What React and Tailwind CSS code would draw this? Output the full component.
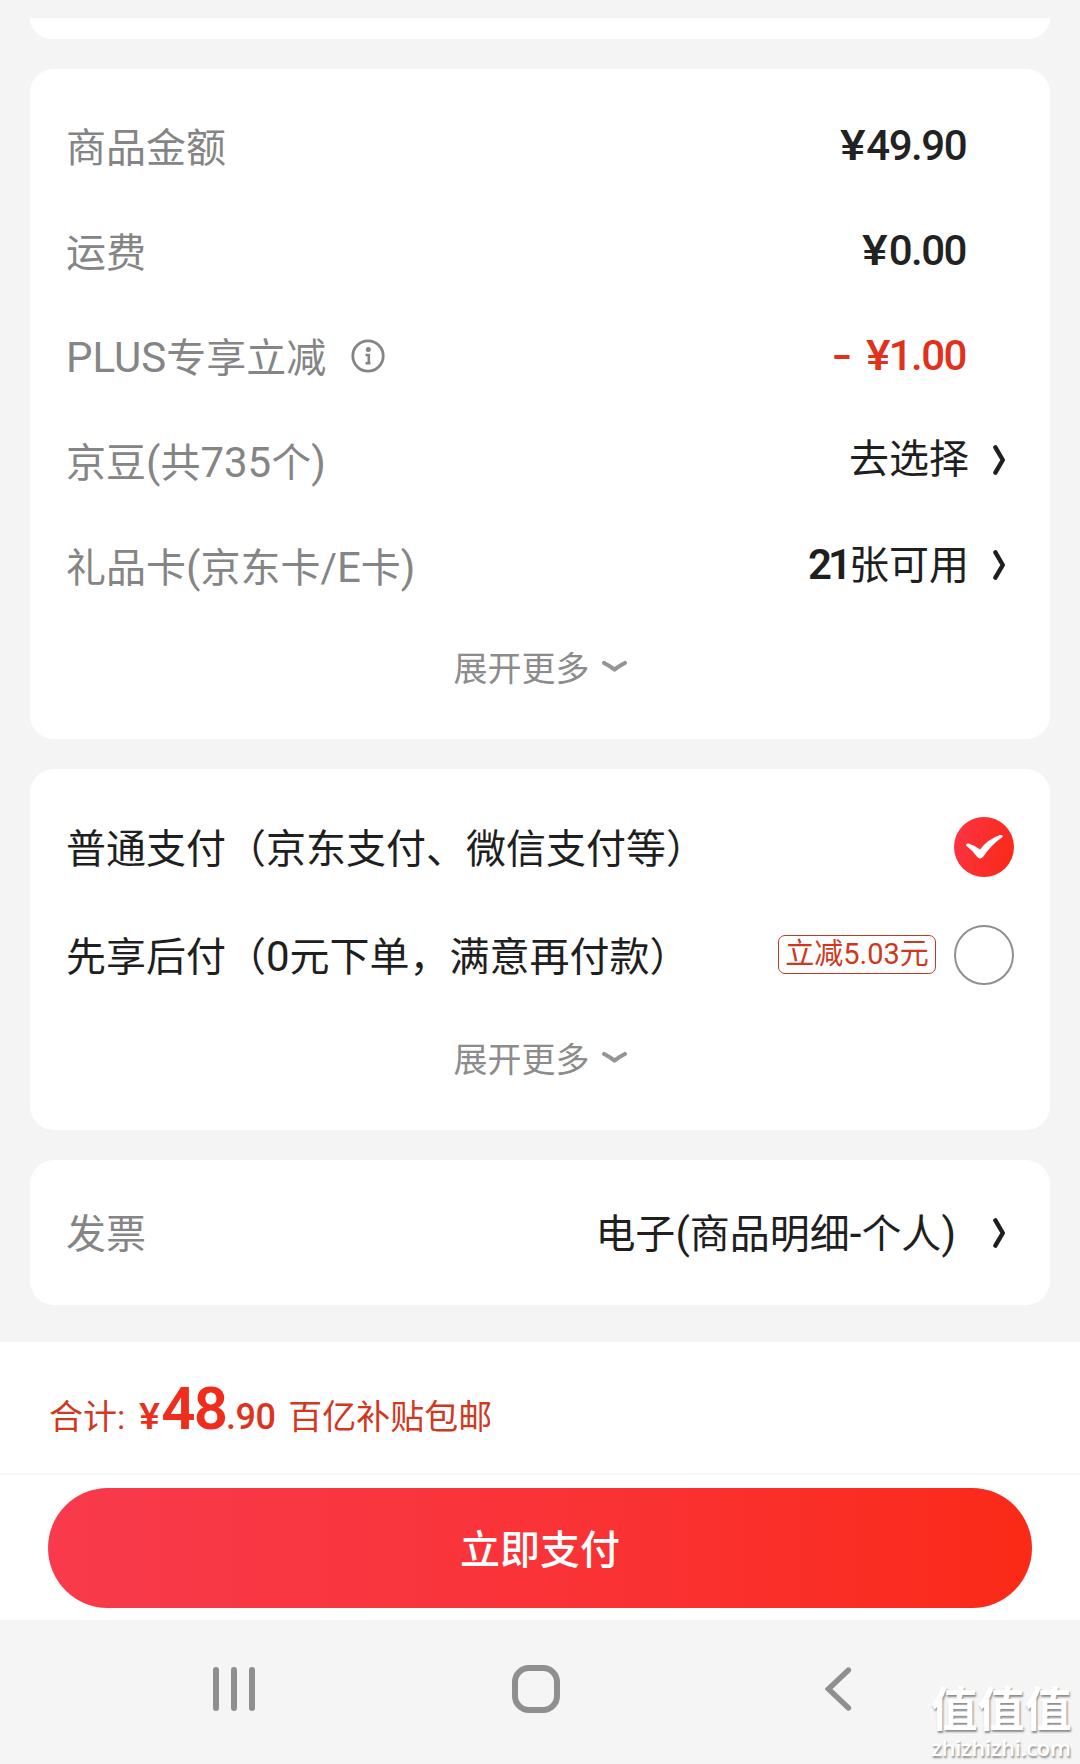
function Latin({ children }) {
  return <span className="text-[42px] leading-[56px]">{children}</span>;
}

function Yen({ tight }) {
  return (
    <span className={tight ? "inline-block origin-right scale-x-110" : "mr-[3px] inline-block origin-right scale-x-[1.15]"}>
      ¥
    </span>
  );
}

const amounts = [
  { label: "商品金额", value: "49.90" },
  { label: "运费", value: "0.00" },
  {
    label: (
      <>
        <Latin>PLUS</Latin>专享立减
      </>
    ),
    value: "1.00",
    info: true,
    discount: true,
  },
];

function InfoIcon() {
  return (
    <svg className="mb-[6px] ml-[25px] h-[34px] w-[34px]" viewBox="0 0 34 34" fill="none">
      <circle cx="17" cy="17" r="15.2" stroke="#858585" strokeWidth="2.8" />
      <circle cx="17.3" cy="10.5" r="2.5" fill="#858585" />
      <path d="M14.5 16h3.3v8M14.5 24.2h5" stroke="#858585" strokeWidth="2.6" />
    </svg>
  );
}

function ArrowRight() {
  return (
    <svg className="h-[30px] w-[13px]" viewBox="0 0 13 30" fill="none">
      <path d="M2.4 2.4 L9.8 15 L2.4 27.6" stroke="#1f1f1f" strokeWidth="4.4" strokeLinecap="round" strokeLinejoin="round" />
    </svg>
  );
}

function ExpandMore() {
  return (
    <button className="flex w-full items-center justify-center text-[34px] leading-[50px] text-[#8c8c8c]">
      <span>展开更多</span>
      <svg className="mb-[6px] ml-3 h-[13px] w-[25px]" viewBox="0 0 25 13" fill="none">
        <path d="M2.2 3 Q7 5.5 12.5 9.5 Q18 5.5 22.8 3" stroke="#949494" strokeWidth="4.2" strokeLinecap="round" strokeLinejoin="round" />
      </svg>
    </button>
  );
}

function Watermark() {
  return (
    <div className="absolute right-[8px] bottom-[4px] flex w-[142px] flex-col items-center text-white [text-shadow:1px_2px_2px_#8c8c8c]">
      <div className="text-[47px] leading-[48px] font-bold">值值值</div>
      <div className="font-['Open_Sans',sans-serif] text-[22px] leading-[26px] font-semibold tracking-[-0.3px]">zhizhizhi.com</div>
    </div>
  );
}

export default function App() {
  return (
    <div className="relative flex h-[1764px] w-[1080px] flex-col overflow-hidden bg-[#f4f4f4] font-[Roboto,'Noto_Sans_CJK_SC',sans-serif] text-[40px] leading-[60px] text-[#1f1f1f]">
      <main className="flex h-[1342px] flex-col gap-[30px] px-[30px] pt-[18px]">
        <div className="h-[21px] shrink-0 rounded-b-[24px] bg-white" />

        <section className="h-[670px] shrink-0 rounded-[24px] bg-white px-[36px] pt-[25px]">
          {amounts.map((row) => (
            <div key={row.value} className="flex h-[105px] items-center justify-between">
              <div className="flex items-center pt-[5px] text-[#858585]">
                <span>{row.label}</span>
                {row.info && <InfoIcon />}
              </div>
              <div
                className={
                  row.discount
                    ? "mr-[48px] flex gap-[18px] pb-[2px] text-[42px] font-medium tracking-[-1.5px] text-[#e1301b]"
                    : "mr-[48px] pb-[2px] text-[42px] font-medium tracking-[-1.5px] text-[#222]"
                }
              >
                {row.discount && <span className="inline-block origin-right scale-x-[1.4]">-</span>}
                <span>
                  <Yen tight={row.discount} />
                  {row.value}
                </span>
              </div>
            </div>
          ))}
          <div className="flex h-[105px] items-center justify-between">
            <span className="pt-[5px] text-[#858585]">
              京豆<Latin>(</Latin>共<Latin>735</Latin>个<Latin>)</Latin>
            </span>
            <div className="flex items-center gap-[24px] pr-[8px] pb-[3px]">
              <span>去选择</span>
              <ArrowRight />
            </div>
          </div>
          <div className="flex h-[105px] items-center justify-between">
            <span className="pt-[5px] text-[#858585]">
              礼品卡<Latin>(</Latin>京东卡/<Latin>E</Latin>卡<Latin>)</Latin>
            </span>
            <div className="flex items-center gap-[24px] pr-[8px] pb-[3px]">
              <span>
                <b className="text-[42px] font-semibold tracking-[-4px]">21</b>
                <span className="ml-px">张可用</span>
              </span>
              <ArrowRight />
            </div>
          </div>
          <div className="pt-[25px]">
            <ExpandMore />
          </div>
        </section>

        <section className="h-[361px] shrink-0 rounded-[24px] bg-white px-[36px] pt-[24px]">
          <div className="flex h-[108px] items-center justify-between">
            <span className="pt-[6px]">普通支付（京东支付、微信支付等）</span>
            <svg className="h-[60px] w-[60px]" viewBox="0 0 60 60">
              <defs>
                <linearGradient id="checked" x1="0" y1="0" x2="1" y2="0.3">
                  <stop offset="0" stopColor="#fb3444" />
                  <stop offset="1" stopColor="#fa2a1c" />
                </linearGradient>
              </defs>
              <circle cx="30" cy="30" r="30" fill="url(#checked)" />
              <path d="M12 28.5 Q12 26 14.5 26.5 Q21 28.5 26 32.5 Q34 22 46 18 Q49.5 17.5 48.5 20 Q38 27 29 40 Q26 43 22.8 39.5 Q18 33 12 28.5Z" fill="#fff" />
            </svg>
          </div>
          <div className="flex h-[108px] items-center justify-between">
            <span className="pt-[6px]">
              先享后付（<Latin>0</Latin>元下单，满意再付款）
            </span>
            <div className="flex items-center gap-[18px]">
              <span className="mb-[2px] flex h-[39px] w-[158px] items-center justify-center rounded-[7px] border border-[#c23a22] pb-px text-[29px] text-[#cf3820]">
                立减5.03元
              </span>
              <span className="h-[60px] w-[60px] rounded-full border-2 border-[#8f8f8f]" />
            </div>
          </div>
          <div className="pt-[26px]">
            <ExpandMore />
          </div>
        </section>

        <section className="flex h-[145px] shrink-0 items-center justify-between rounded-[24px] bg-white pr-[44px] pl-[36px]">
          <span className="pt-[4px] text-[#858585]">发票</span>
          <div className="flex items-center gap-[37px]">
            <span className="pt-[4px]">
              电子<Latin>(</Latin>商品明细<Latin>-</Latin>个人<Latin>)</Latin>
            </span>
            <ArrowRight />
          </div>
        </section>
      </main>

      <footer className="h-[278px] bg-white">
        <div className="flex h-[133px] items-baseline border-b-2 border-[#f5f5f5] px-[49px] pt-[27px] text-[34px] text-[#d0381f]">
          <span>合计:</span>
          <span className="mr-[3px] ml-[14px] inline-block origin-left scale-x-110 text-[36px] font-medium text-[#e8301c]">¥</span>
          <span className="text-[60px] leading-[80px] font-semibold tracking-[-2px] text-[#f02d1c]">48</span>
          <span className="text-[36px] font-medium tracking-[-0.5px] text-[#dd3420]">.90</span>
          <span className="ml-[13px]">百亿补贴包邮</span>
        </div>
        <div className="px-[48px] pt-[13px]">
          <button className="h-[120px] w-full rounded-full bg-linear-to-r from-[#f83a4c] to-[#fb2a16] pt-[5px] font-medium text-white">
            立即支付
          </button>
        </div>
      </footer>

      <nav className="flex h-[144px] items-start bg-[#f5f5f5] pt-[45px] pl-[213px]">
        <svg className="mt-[2px] h-[44px] w-[43px]" viewBox="0 0 43 44" fill="#8f8f8f">
          <rect x="0" width="6" height="44" rx="3" />
          <rect x="18" width="6" height="44" rx="3" />
          <rect x="36" width="6" height="44" rx="3" />
        </svg>
        <span className="ml-[256px] h-[48px] w-[48px] rounded-[17px] border-6 border-[#8f8f8f]" />
        <svg className="mt-[2px] ml-[265px] h-[44px] w-[27px]" viewBox="0 0 27 44" fill="none">
          <path d="M23.5 3 L3.5 22 L23.5 41" stroke="#8f8f8f" strokeWidth="5.4" strokeLinecap="round" />
        </svg>
      </nav>

      <Watermark />
    </div>
  );
}
